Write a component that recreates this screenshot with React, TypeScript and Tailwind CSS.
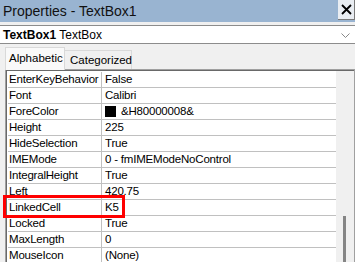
import React from "react";

const rows: [string, React.ReactNode][] = [
  ["EnterKeyBehavior", "False"],
  ["Font", "Calibri"],
  [
    "ForeColor",
    <span className="flex items-center">
      <span className="inline-block w-[11px] h-[11px] bg-black mr-[5px]" />
      &amp;H80000008&amp;
    </span>,
  ],
  ["Height", "225"],
  ["HideSelection", "True"],
  ["IMEMode", "0 - fmIMEModeNoControl"],
  ["IntegralHeight", "True"],
  ["Left", "420.75"],
  ["LinkedCell", "K5"],
  ["Locked", "True"],
  ["MaxLength", "0"],
  ["MouseIcon", "(None)"],
];

export default function App() {
  return (
    <div
      className="w-[355px] h-[262px] overflow-hidden bg-[#f0f0f0] flex flex-col relative text-black"
      style={{ fontFamily: '"Liberation Sans", Arial, sans-serif' }}
    >
      {/* Title bar */}
      <div className="h-[22px] bg-[#99b4d1] flex items-center justify-between shrink-0">
        <span className="pl-[3px] text-[14px] leading-none text-[#111]">Properties - TextBox1</span>
        <div className="w-[17px] h-[20px] self-start bg-[#e9edf2] border-r border-b border-[#7a7a7a] flex items-center justify-center">
          <svg width="11" height="11" viewBox="0 0 11 11">
            <path d="M1 1 L10 10 M10 1 L1 10" stroke="#000" strokeWidth="1.8" />
          </svg>
        </div>
      </div>
      <div className="h-[3px] shrink-0" />
      {/* Object dropdown */}
      <div className="h-[19px] bg-white border-t border-b border-[#8c8c8c] flex items-center justify-between shrink-0">
        <span className="pl-[3px] text-[12px] leading-none">
          <b className="font-bold">TextBox1</b> TextBox
        </span>
        <svg width="9" height="6" viewBox="0 0 9 6" className="mr-[5px] mt-[2px]">
          <path d="M0.5 0.5 L4.5 4.5 L8.5 0.5" stroke="#888" fill="none" strokeWidth="1" />
        </svg>
      </div>
      {/* Tabs */}
      <div className="h-[25px] flex items-end pl-[5px] shrink-0">
        <div className="h-[23px] w-[60px] bg-[#f9f9f9] border border-b-0 border-[#d9d9d9] flex items-start pl-[3px] pt-[5px] text-[11.5px] leading-none relative z-10 -mb-px">
          Alphabetic
        </div>
        <div className="h-[19px] w-[67px] bg-[#f0f0f0] border border-l-0 border-b-0 border-[#d9d9d9] flex items-start pl-[5px] pt-[4px] text-[11.5px] leading-none">
          Categorized
        </div>
      </div>
      {/* Grid */}
      <div className="flex-1 ml-[5px] border-t border-l border-r border-[#a0a0a0] flex min-h-0">
        <div className="flex-1 border-t border-l border-[#696969] bg-white flex min-h-0">
          <div className="flex-1 flex flex-col pt-[1px] pl-[1px] overflow-hidden">
            {rows.map(([k, v], i) => (
              <div
                key={i}
                className="h-[16px] shrink-0 flex border-b border-[#c0c0c0] text-[11.5px] leading-[15px] tracking-[-0.2px]"
              >
                <div className="w-[94px] shrink-0 border-r border-[#c0c0c0] pl-[1px] whitespace-nowrap overflow-hidden">
                  {k}
                </div>
                <div className="flex-1 pl-[3px] whitespace-nowrap overflow-hidden">{v}</div>
              </div>
            ))}
          </div>
          <div className="w-[17px] bg-[#f0f0f0] shrink-0 relative">
            <div className="absolute left-[7px] top-[145px] bottom-0 w-[3px] bg-[#858585]" />
          </div>
          <div className="w-[1px] bg-[#f0f0f0]" />
        </div>
      </div>
      {/* Red highlight */}
      <div className="absolute left-[3px] top-[195px] w-[122px] h-[23px] border-[3px] border-[#ff0000]" />
    </div>
  );
}
